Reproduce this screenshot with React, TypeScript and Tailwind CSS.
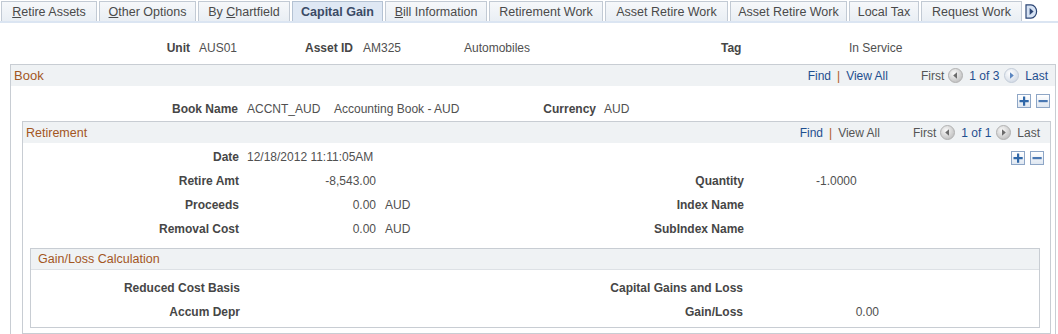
import React from "react";

type Tab = { label: string; key?: string; rest?: string; pre?: string; w: string; active?: boolean };

const tabs: Tab[] = [
  { label: "Retire Assets", key: "R", rest: "etire Assets", w: "w-[96px]" },
  { label: "Other Options", key: "O", rest: "ther Options", w: "w-[97px]" },
  { label: "By Chartfield", pre: "By ", key: "C", rest: "hartfield", w: "w-[92px]" },
  { label: "Capital Gain", w: "w-[91px]", active: true },
  { label: "Bill Information", key: "B", rest: "ill Information", w: "w-[102px]" },
  { label: "Retirement Work", w: "w-[114px]" },
  { label: "Asset Retire Work", w: "w-[123px]" },
  { label: "Asset Retire Work", w: "w-[117px]" },
  { label: "Local Tax", w: "w-[70px]" },
  { label: "Request Work", w: "w-[101px]" },
];

function CircleArrow({ dir, active, id }: { dir: "l" | "r"; active?: boolean; id: string }) {
  return (
    <svg width="15" height="15" viewBox="0 0 15 15">
      <defs>
        <radialGradient id={id} cx="40%" cy="35%" r="70%">
          <stop offset="0%" stopColor={active ? "#ffffff" : "#fafafa"} />
          <stop offset="100%" stopColor={active ? "#cfd8e4" : "#bdbdbd"} />
        </radialGradient>
      </defs>
      <circle cx="7.5" cy="7.5" r="7" fill={`url(#${id})`} stroke={active ? "#c3ccd8" : "#b2b2b2"} />
      {dir === "l" ? (
        <path d="M9 4.2 L5.2 7.5 L9 10.8 Z" fill="#6b6b6b" />
      ) : (
        <path d="M6 4.2 L9.8 7.5 L6 10.8 Z" fill={active ? "#5b86c0" : "#6b6b6b"} />
      )}
    </svg>
  );
}

function PlusMinus() {
  return (
    <div className="flex gap-[5px]">
      <div className="w-[14px] h-[14px] border border-[#8ea6c6] bg-gradient-to-b from-white to-[#dfe7f1] flex items-center justify-center">
        <svg width="10" height="10" viewBox="0 0 10 10">
          <path d="M4 0.5h2.2v3.5h3.5v2.2H6.2v3.5H4V6.2H0.5V4H4z" fill="#2f67a8" />
        </svg>
      </div>
      <div className="w-[14px] h-[14px] border border-[#8ea6c6] bg-gradient-to-b from-white to-[#dfe7f1] flex items-center justify-center">
        <svg width="10" height="10" viewBox="0 0 10 10">
          <path d="M0.5 4h9.2v2.2H0.5z" fill="#4a78b3" />
        </svg>
      </div>
    </div>
  );
}

function Nav({ pos, viewAll, last, next, id }: { pos: string; viewAll: boolean; last: boolean; next: boolean; id: string }) {
  return (
    <div className="flex items-center text-[12px]">
      <span className="text-[#1f4f8f]">Find</span>
      <span className="mx-[6px] text-[#b0581c]">|</span>
      <span className={viewAll ? "text-[#1f4f8f]" : "text-[#555]"}>View All</span>
      <span className="ml-[33px] text-[#555]">First</span>
      <span className="ml-[4px] flex">
        <CircleArrow dir="l" id={id + "l"} />
      </span>
      <span className="ml-[6px] text-[#1f4f8f]">{pos}</span>
      <span className="ml-[5px] flex">
        <CircleArrow dir="r" active={next} id={id + "r"} />
      </span>
      <span className={`ml-[6px] ${last ? "text-[#1f4f8f]" : "text-[#555]"}`}>Last</span>
    </div>
  );
}

const label = "font-bold text-[#464646] text-[12px] text-right";
const value = "text-[#505050] text-[12px]";

export default function App() {
  return (
    <div className="w-[1058px] h-[334px] overflow-hidden bg-white font-['Liberation_Sans',Arial,sans-serif] leading-[14px]">
      {/* tabs */}
      <div className="flex items-end gap-[2px] pl-[1px] pt-[1px] h-[21px]">
        {tabs.map((t, i) => (
          <div
            key={i}
            className={`${t.w} h-[20px] flex items-center justify-center border border-b-0 text-[12.5px] ${
              t.active
                ? "bg-[#dfe8f4] border-[#b4c2d3] font-bold text-[#3b4b66]"
                : "bg-gradient-to-b from-[#f6f8fa] to-[#e9eef4] border-[#c2cad4] text-[#4a4a4a]"
            }`}
          >
            {t.key ? (
              <span>
                {t.pre}
                <span className="underline">{t.key}</span>
                {t.rest}
              </span>
            ) : (
              t.label
            )}
          </div>
        ))}
        <div className="ml-[1px] self-center flex">
          <svg width="13" height="15" viewBox="0 0 13 15">
            <path d="M1 0.8 H6 A5.6 6.7 0 0 1 6 14.2 H1 Z" fill="#d6e2f3" stroke="#2d4675" strokeWidth="1.2" />
            <path d="M4.6 4 L8.6 7.5 L4.6 11 Z" fill="#2d4675" />
          </svg>
        </div>
      </div>
      <div className="h-[2px] bg-[#dbe5f2]" />

      {/* header */}
      <div className="flex pt-[18px] pb-[9px] text-[12px]">
        <div className={`${label} w-[190px]`}>Unit</div>
        <div className={`${value} ml-[9px] w-[105px]`}>AUS01</div>
        <div className={`${label} w-[49px]`}>Asset ID</div>
        <div className={`${value} ml-[10px] w-[101px]`}>AM325</div>
        <div className={`${value} w-[257px]`}>Automobiles</div>
        <div className={`${label} w-[19px] text-left`}>Tag</div>
        <div className={`${value} ml-[109px]`}>In Service</div>
      </div>

      {/* Book */}
      <div className="ml-[10px] w-[1046px] border border-[#c8cdd3] pb-[6px]">
        <div className="h-[21px] bg-[#eff2f4] flex items-center justify-between pl-[3px] pr-[7px]">
          <span className="text-[13px] text-[#a3561f]">Book</span>
          <Nav pos="1 of 3" viewAll last next id="bk" />
        </div>
        <div className="flex h-[35px]">
          <div className="flex pt-[16px]">
            <div className={`${label} w-[227px]`}>Book Name</div>
            <div className={`${value} ml-[9px] w-[87px]`}>ACCNT_AUD</div>
            <div className={`${value} w-[209px]`}>Accounting Book - AUD</div>
            <div className={`${label} text-left w-[53px]`}>Currency</div>
            <div className={`${value} ml-[8px]`}>AUD</div>
          </div>
          <div className="ml-auto mr-[5px] pt-[8px]">
            <PlusMinus />
          </div>
        </div>

        {/* Retirement */}
        <div className="ml-[11px] mr-[4px] border border-[#c8cdd3] pb-[5px]">
          <div className="h-[21px] bg-[#eff2f4] flex items-center justify-between pl-[3px] pr-[10px]">
            <span className="text-[12.5px] text-[#a3561f]">Retirement</span>
            <Nav pos="1 of 1" viewAll={false} last={false} next={false} id="rt" />
          </div>
          <div className="pt-[2px]">
            <div className="flex h-[24px] items-center">
              <div className={`${label} w-[216px]`}>Date</div>
              <div className={`${value} ml-[8px]`}>12/18/2012 11:11:05AM</div>
              <div className="ml-auto mr-[6px] self-start pt-[6px]">
                <PlusMinus />
              </div>
            </div>
            {[
              ["Retire Amt", "-8,543.00", "", "Quantity", "-1.0000"],
              ["Proceeds", "0.00", "AUD", "Index Name", ""],
              ["Removal Cost", "0.00", "AUD", "SubIndex Name", ""],
            ].map((r) => (
              <div key={r[0]} className="flex h-[24px] items-center">
                <div className={`${label} w-[216px]`}>{r[0]}</div>
                <div className={`${value} ml-[8px] w-[129px] text-right`}>{r[1]}</div>
                <div className={`${value} ml-[9px] w-[137px]`}>{r[2]}</div>
                <div className={`${label} w-[222px]`}>{r[3]}</div>
                <div className={`${value} ml-[72px]`}>{r[4]}</div>
              </div>
            ))}
          </div>

          {/* Gain/Loss */}
          <div className="mt-[7px] ml-[7px] mr-[10px] border border-[#c8cdd3] pb-[3px]">
            <div className="h-[21px] bg-[#eff2f4] border-b border-[#dde1e5] flex items-center pl-[7px]">
              <span className="text-[12.5px] text-[#a3561f]">Gain/Loss Calculation</span>
            </div>
            <div className="pt-[6px]">
              {[
                ["Reduced Cost Basis", "Capital Gains and Loss", ""],
                ["Accum Depr", "Gain/Loss", "0.00"],
              ].map((r) => (
                <div key={r[0]} className="flex h-[24px] items-center">
                  <div className={`${label} w-[209px]`}>{r[0]}</div>
                  <div className={`${label} w-[503px]`}>{r[1]}</div>
                  <div className={`${value} w-[136px] text-right`}>{r[2]}</div>
                </div>
              ))}
            </div>
          </div>
        </div>
      </div>
    </div>
  );
}
